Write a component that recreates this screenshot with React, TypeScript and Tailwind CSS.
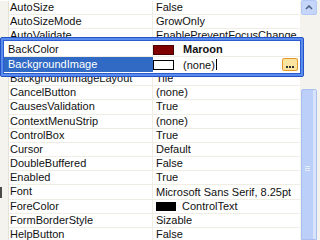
import React from 'react';

type Prop = { name: string; value: string; swatch?: string; marker?: boolean };

const props: Prop[] = [
  { name: 'AutoSize', value: 'False' },
  { name: 'AutoSizeMode', value: 'GrowOnly' },
  { name: 'AutoValidate', value: 'EnablePreventFocusChange' },
  { name: 'BackColor', value: 'Maroon' },
  { name: 'BackgroundImage', value: '(none)' },
  { name: 'BackgroundImageLayout', value: 'Tile' },
  { name: 'CancelButton', value: '(none)' },
  { name: 'CausesValidation', value: 'True' },
  { name: 'ContextMenuStrip', value: '(none)' },
  { name: 'ControlBox', value: 'True' },
  { name: 'Cursor', value: 'Default' },
  { name: 'DoubleBuffered', value: 'False' },
  { name: 'Enabled', value: 'True' },
  { name: 'Font', value: 'Microsoft Sans Serif, 8.25pt', marker: true },
  { name: 'ForeColor', value: 'ControlText', swatch: '#000000' },
  { name: 'FormBorderStyle', value: 'Sizable' },
  { name: 'HelpButton', value: 'False' }
];

export default function App() {
  return (
    <div className="relative h-[240px] w-[320px] overflow-hidden bg-white font-['Liberation_Sans',Arial,sans-serif] text-[11px] text-[#111]">
      <div className="flex h-full">
        <div className="flex-1 pt-px">
          {props.map((p) => (
            <Row key={p.name} prop={p} />
          ))}
        </div>
        <Scrollbar />
      </div>
      <EditPopup />
    </div>
  );
}

function Row({ prop }: { prop: Prop }) {
  return (
    <div className="grid h-[14.2px] grid-cols-[9px_144px_1fr] leading-[13px]">
      <div className="flex items-center border-r border-[#e4e2d8] bg-[#f4f3ee]">
        {prop.marker && <div className="h-[11px] w-[2px] bg-[#4a4a4a]" />}
      </div>
      <div className="truncate border-r border-b border-[#efede4] pl-px">{prop.name}</div>
      <div className="flex items-center truncate border-b border-[#efede4] pl-[3px]">
        {prop.swatch && <span className="mr-[6px] h-[9px] w-[20px] shrink-0" style={{ background: prop.swatch }} />}
        <span className="truncate whitespace-nowrap">{prop.value}</span>
      </div>
    </div>
  );
}

function Scrollbar() {
  return (
    <div className="flex w-[20px] flex-col bg-[#f4f3ee] pl-px pr-[3px]">
      <div className="flex h-[15px] items-center justify-center rounded-[2px] border border-[#b4c8f5] bg-[#c6d6fb]">
        <svg width="8" height="5" viewBox="0 0 8 5">
          <path d="M1 4 L4 1 L7 4" fill="none" stroke="#4d6185" strokeWidth="1.6" />
        </svg>
      </div>
      <div className="h-[74px]" />
      <div className="flex flex-1 rounded-t-[2px] border border-[#a9bff2] bg-[#bccff9]">
        <div className="flex flex-1 flex-col items-center pt-[76px]">
          <div className="flex flex-col gap-px">
            <div className="h-px w-[5px] bg-[#e6edfd]" />
            <div className="h-px w-[5px] bg-[#e6edfd]" />
            <div className="h-px w-[5px] bg-[#e6edfd]" />
          </div>
        </div>
        <div className="w-[3px] bg-[#d9e4fc]" />
      </div>
    </div>
  );
}

function EditPopup() {
  return (
    <div className="absolute left-0 top-[37px] h-[40px] w-[304px] rounded-[2px] border border-[#2452c6] bg-[#5a8cee] p-[2px]">
      <div className="h-full border border-[#2d5cd2] bg-white">
        <div className="grid h-[16px] grid-cols-[149px_1fr] border-b border-[#efede4] pt-[2px] leading-[13px]">
          <div className="border-r border-[#efede4] pl-[4px]">BackColor</div>
          <div className="flex items-center">
            <span className="h-[10px] w-[21px] border border-[#4a0000] bg-[#800000]" />
            <span className="ml-[9px] font-bold">Maroon</span>
          </div>
        </div>
        <div className="grid h-[15px] grid-cols-[149px_1fr] leading-[14px]">
          <div className="bg-[#316ac5] pl-[4px] text-white">BackgroundImage</div>
          <div className="flex items-center pr-[2px]">
            <span className="h-[10px] w-[21px] border border-black bg-white" />
            <span className="ml-[9px]">(none)</span>
            <span className="ml-px h-[11px] w-px bg-black" />
            <span className="ml-auto flex h-[13px] w-[16px] items-end justify-center rounded-[2px] border border-[#e39a2b] bg-[#fbe3a0] pb-[2px]">
              <span className="flex gap-px">
                <span className="h-[2px] w-[2px] bg-[#333]" />
                <span className="h-[2px] w-[2px] bg-[#333]" />
                <span className="h-[2px] w-[2px] bg-[#333]" />
              </span>
            </span>
          </div>
        </div>
      </div>
    </div>
  );
}
